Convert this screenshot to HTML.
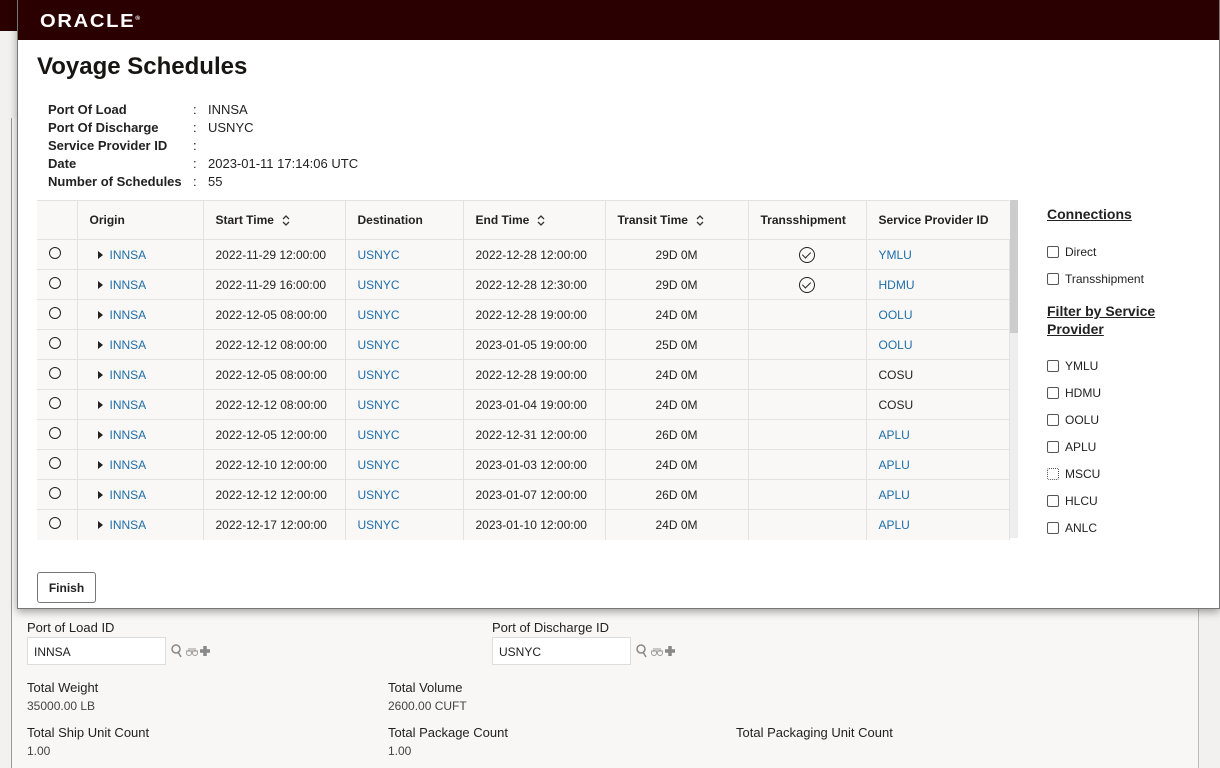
<!DOCTYPE html>
<html><head><meta charset="utf-8"><style>
*{box-sizing:border-box;margin:0;padding:0}
body{width:1220px;height:760px;overflow:hidden;position:relative;background:#f2f1f0;font-family:"Liberation Sans",Arial,sans-serif;font-size:12px;color:#222}
.topbar{position:absolute;left:0;top:0;width:1220px;height:31px;background:#2a0000}
.help{position:absolute;right:4px;top:7px;color:#fff;font-size:11px;text-decoration:underline}
.bgpage{position:absolute;left:11px;top:118px;width:1188px;height:650px;background:#f8f7f6;border-left:1px solid #999;border-right:1px solid #bbb}
.modal{position:absolute;left:17px;top:0;width:1203px;height:609px;background:#fff;box-shadow:0 3px 8px rgba(0,0,0,.35);border:1px solid #777;border-top:none}
.mhead{height:40px;background:#2a0000;position:relative}
.logo{position:absolute;left:22px;top:11px;color:#fff;font-size:18px;font-weight:bold;letter-spacing:1.5px;transform:scaleX(1.12);transform-origin:left}
h1{position:absolute;left:19px;top:53px;font-size:24px;font-weight:bold;color:#161513}
.info{position:absolute;left:30px;top:101px;font-size:13px;line-height:18px}
.info div{display:flex}.info b{width:145px;font-weight:bold}.info span{width:15px}
table{position:absolute;left:19px;top:200px;border-collapse:collapse;background:#f9f8f7;font-size:12px}
td,th{height:30px;border:1px solid #e4e2e0;padding:0 12px;text-align:left;white-space:nowrap}
th{height:39px;font-weight:bold;color:#222}
tr td:first-child,tr th:first-child{border-left:none}
a{color:#1f6ea8;text-decoration:none}
.rad{display:inline-block;width:12px;height:12px;border:1.3px solid #222;border-radius:50%}
.tri{display:inline-block;width:0;height:0;border-left:5px solid #222;border-top:4px solid transparent;border-bottom:4px solid transparent;margin:0 7px 0 8px}
.chk{display:inline-block;width:16px;height:16px;border:1.3px solid #222;border-radius:50%;position:relative;vertical-align:middle}
.chk:after{content:"";position:absolute;left:4px;top:2px;width:4px;height:7px;border:solid #222;border-width:0 1.5px 1.5px 0;transform:rotate(45deg)}
.sb{position:absolute;left:992px;top:200px;width:8px;height:338px;background:#eee}
.sb div{height:133px;background:#ccc}
.side{position:absolute;left:1029px;font-size:12px}
.side h3{font-size:14px;text-decoration:underline;font-weight:bold;line-height:18px}
.cb{display:flex;align-items:center;height:27px}
.cb i{width:12px;height:12px;border:1.5px solid #555;border-radius:2px;margin-right:6px}
.finish{position:absolute;left:19px;top:572px;width:59px;height:31px;border:1px solid #777;border-radius:3px;font-weight:bold;display:flex;align-items:center;justify-content:center;background:#fff}
.lbl{position:absolute;font-size:13px;color:#222}
.val{position:absolute;font-size:12px;color:#444}
.inp{position:absolute;width:139px;height:28px;background:#fff;border:1px solid #ddd;font-size:12px;padding:7px 6px}
.icons{position:absolute}
svg.s{vertical-align:middle;margin-left:8px}
</style></head><body>
<div class="topbar"><div class="help">Help</div></div>
<div class="bgpage"></div>
<div class="lbl" style="left:27px;top:620px">Port of Load ID</div>
<div class="inp" style="left:27px;top:637px">INNSA</div>
<svg class="icons" style="left:170px;top:643px" width="52" height="16"><circle cx="6" cy="6" r="4" fill="none" stroke="#888" stroke-width="1.5"/><path d="M8 9l3 5" stroke="#888" stroke-width="1.5"/><path d="M16 8h12M18 6h8" stroke="#999" stroke-width="1"/><circle cx="19" cy="10" r="2.5" fill="none" stroke="#999"/><circle cx="25" cy="10" r="2.5" fill="none" stroke="#999"/><path d="M30 8h10M35 3v10" stroke="#888" stroke-width="3.5"/></svg>
<div class="lbl" style="left:492px;top:620px">Port of Discharge ID</div>
<div class="inp" style="left:492px;top:637px">USNYC</div>
<svg class="icons" style="left:635px;top:643px" width="52" height="16"><circle cx="6" cy="6" r="4" fill="none" stroke="#888" stroke-width="1.5"/><path d="M8 9l3 5" stroke="#888" stroke-width="1.5"/><path d="M16 8h12M18 6h8" stroke="#999" stroke-width="1"/><circle cx="19" cy="10" r="2.5" fill="none" stroke="#999"/><circle cx="25" cy="10" r="2.5" fill="none" stroke="#999"/><path d="M30 8h10M35 3v10" stroke="#888" stroke-width="3.5"/></svg>
<div class="lbl" style="left:27px;top:680px">Total Weight</div><div class="val" style="left:27px;top:699px">35000.00 LB</div>
<div class="lbl" style="left:388px;top:680px">Total Volume</div><div class="val" style="left:388px;top:699px">2600.00 CUFT</div>
<div class="lbl" style="left:27px;top:725px">Total Ship Unit Count</div><div class="val" style="left:27px;top:744px">1.00</div>
<div class="lbl" style="left:388px;top:725px">Total Package Count</div><div class="val" style="left:388px;top:744px">1.00</div>
<div class="lbl" style="left:736px;top:725px">Total Packaging Unit Count</div>

<div class="modal">
<div class="mhead"><div class="logo">ORACLE<sup style="font-size:6px">®</sup></div></div>
<h1>Voyage Schedules</h1>
<div class="info">
<div><b>Port Of Load</b><span>:</span>INNSA</div>
<div><b>Port Of Discharge</b><span>:</span>USNYC</div>
<div><b>Service Provider ID</b><span>:</span></div>
<div><b>Date</b><span>:</span>2023-01-11 17:14:06 UTC</div>
<div><b>Number of Schedules</b><span>:</span>55</div>
</div>
<table>
<tr><th style="width:40px"></th><th style="width:126px">Origin</th><th style="width:142px">Start Time<svg class="s" width="8" height="11"><path d="M1 4l3-3 3 3M1 7l3 3 3-3" fill="none" stroke="#333" stroke-width="1.3"/></svg></th><th style="width:118px">Destination</th><th style="width:142px">End Time<svg class="s" width="8" height="11"><path d="M1 4l3-3 3 3M1 7l3 3 3-3" fill="none" stroke="#333" stroke-width="1.3"/></svg></th><th style="width:143px">Transit Time<svg class="s" width="8" height="11"><path d="M1 4l3-3 3 3M1 7l3 3 3-3" fill="none" stroke="#333" stroke-width="1.3"/></svg></th><th style="width:118px">Transshipment</th><th style="width:143px;border-right:none">Service Provider ID</th></tr>
<tr><td><i class="rad"></i></td><td><i class="tri"></i><a>INNSA</a></td><td>2022-11-29 12:00:00</td><td><a>USNYC</a></td><td>2022-12-28 12:00:00</td><td style="text-align:center">29D 0M</td><td style="text-align:center"><i class="chk"></i></td><td><a>YMLU</a></td></tr>
<tr><td><i class="rad"></i></td><td><i class="tri"></i><a>INNSA</a></td><td>2022-11-29 16:00:00</td><td><a>USNYC</a></td><td>2022-12-28 12:30:00</td><td style="text-align:center">29D 0M</td><td style="text-align:center"><i class="chk"></i></td><td><a>HDMU</a></td></tr>
<tr><td><i class="rad"></i></td><td><i class="tri"></i><a>INNSA</a></td><td>2022-12-05 08:00:00</td><td><a>USNYC</a></td><td>2022-12-28 19:00:00</td><td style="text-align:center">24D 0M</td><td></td><td><a>OOLU</a></td></tr>
<tr><td><i class="rad"></i></td><td><i class="tri"></i><a>INNSA</a></td><td>2022-12-12 08:00:00</td><td><a>USNYC</a></td><td>2023-01-05 19:00:00</td><td style="text-align:center">25D 0M</td><td></td><td><a>OOLU</a></td></tr>
<tr><td><i class="rad"></i></td><td><i class="tri"></i><a>INNSA</a></td><td>2022-12-05 08:00:00</td><td><a>USNYC</a></td><td>2022-12-28 19:00:00</td><td style="text-align:center">24D 0M</td><td></td><td>COSU</td></tr>
<tr><td><i class="rad"></i></td><td><i class="tri"></i><a>INNSA</a></td><td>2022-12-12 08:00:00</td><td><a>USNYC</a></td><td>2023-01-04 19:00:00</td><td style="text-align:center">24D 0M</td><td></td><td>COSU</td></tr>
<tr><td><i class="rad"></i></td><td><i class="tri"></i><a>INNSA</a></td><td>2022-12-05 12:00:00</td><td><a>USNYC</a></td><td>2022-12-31 12:00:00</td><td style="text-align:center">26D 0M</td><td></td><td><a>APLU</a></td></tr>
<tr><td><i class="rad"></i></td><td><i class="tri"></i><a>INNSA</a></td><td>2022-12-10 12:00:00</td><td><a>USNYC</a></td><td>2023-01-03 12:00:00</td><td style="text-align:center">24D 0M</td><td></td><td><a>APLU</a></td></tr>
<tr><td><i class="rad"></i></td><td><i class="tri"></i><a>INNSA</a></td><td>2022-12-12 12:00:00</td><td><a>USNYC</a></td><td>2023-01-07 12:00:00</td><td style="text-align:center">26D 0M</td><td></td><td><a>APLU</a></td></tr>
<tr><td style="height:28px;border-bottom:none"><i class="rad"></i></td><td style="border-bottom:none"><i class="tri"></i><a>INNSA</a></td><td style="border-bottom:none">2022-12-17 12:00:00</td><td style="border-bottom:none"><a>USNYC</a></td><td style="border-bottom:none">2023-01-10 12:00:00</td><td style="text-align:center;border-bottom:none">24D 0M</td><td style="border-bottom:none"></td><td style="border-bottom:none"><a>APLU</a></td></tr>
</table>
<div class="sb"><div></div></div>
<div class="side" style="top:205px"><h3>Connections</h3></div>
<div class="side" style="top:238px"><div class="cb"><i></i>Direct</div><div class="cb"><i></i>Transshipment</div></div>
<div class="side" style="top:302px"><h3>Filter by Service<br>Provider</h3></div>
<div class="side" style="top:352px">
<div class="cb"><i></i>YMLU</div><div class="cb"><i></i>HDMU</div><div class="cb"><i></i>OOLU</div><div class="cb"><i></i>APLU</div><div class="cb"><i style="border-style:dotted"></i>MSCU</div><div class="cb"><i></i>HLCU</div><div class="cb"><i></i>ANLC</div>
</div>
<div class="finish">Finish</div>
</div>
</body></html>
